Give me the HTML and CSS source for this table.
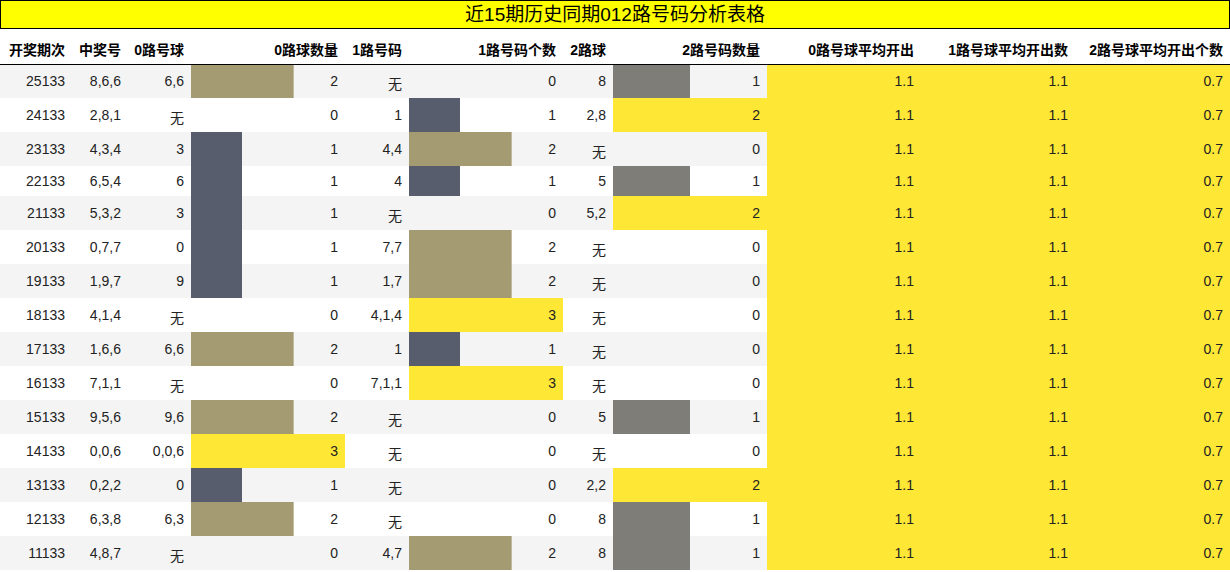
FILE: index.html
```html
<!DOCTYPE html>
<html lang="zh">
<head>
<meta charset="utf-8">
<title>近15期历史同期012路号码分析表格</title>
<link rel="stylesheet" href="styles.css">
</head>
<body>
<div class="title">近15期历史同期012路号码分析表格</div>
<table class="grid">
<colgroup>
<col class="c1"><col class="c2"><col class="c3"><col class="c4"><col class="c5"><col class="c6"><col class="c7"><col class="c8"><col class="c9"><col class="c10"><col class="c11">
</colgroup>
<thead>
<tr><th>开奖期次</th><th>中奖号</th><th>0路号球</th><th>0路球数量</th><th>1路号码</th><th>1路号码个数</th><th>2路球</th><th>2路号码数量</th><th>0路号球平均开出</th><th>1路号球平均开出数</th><th>2路号球平均开出个数</th></tr>
</thead>
<tbody>
<tr class="odd"><td>25133</td><td>8,6,6</td><td>6,6</td><td class="bar khaki" style="--w:66.67%">2</td><td class="cjk">无</td><td class="bar">0</td><td>8</td><td class="bar gray" style="--w:50%">1</td><td class="avg">1.1</td><td class="avg">1.1</td><td class="avg">0.7</td></tr>
<tr><td>24133</td><td>2,8,1</td><td class="cjk">无</td><td class="bar">0</td><td>1</td><td class="bar slate" style="--w:33.33%">1</td><td>2,8</td><td class="bar yellow" style="--w:100%">2</td><td class="avg">1.1</td><td class="avg">1.1</td><td class="avg">0.7</td></tr>
<tr class="odd"><td>23133</td><td>4,3,4</td><td>3</td><td class="bar slate" style="--w:33.33%">1</td><td>4,4</td><td class="bar khaki" style="--w:66.67%">2</td><td class="cjk">无</td><td class="bar">0</td><td class="avg">1.1</td><td class="avg">1.1</td><td class="avg">0.7</td></tr>
<tr class="short"><td>22133</td><td>6,5,4</td><td>6</td><td class="bar slate" style="--w:33.33%">1</td><td>4</td><td class="bar slate" style="--w:33.33%">1</td><td>5</td><td class="bar gray" style="--w:50%">1</td><td class="avg">1.1</td><td class="avg">1.1</td><td class="avg">0.7</td></tr>
<tr class="odd"><td>21133</td><td>5,3,2</td><td>3</td><td class="bar slate" style="--w:33.33%">1</td><td class="cjk">无</td><td class="bar">0</td><td>5,2</td><td class="bar yellow" style="--w:100%">2</td><td class="avg">1.1</td><td class="avg">1.1</td><td class="avg">0.7</td></tr>
<tr><td>20133</td><td>0,7,7</td><td>0</td><td class="bar slate" style="--w:33.33%">1</td><td>7,7</td><td class="bar khaki" style="--w:66.67%">2</td><td class="cjk">无</td><td class="bar">0</td><td class="avg">1.1</td><td class="avg">1.1</td><td class="avg">0.7</td></tr>
<tr class="odd"><td>19133</td><td>1,9,7</td><td>9</td><td class="bar slate" style="--w:33.33%">1</td><td>1,7</td><td class="bar khaki" style="--w:66.67%">2</td><td class="cjk">无</td><td class="bar">0</td><td class="avg">1.1</td><td class="avg">1.1</td><td class="avg">0.7</td></tr>
<tr><td>18133</td><td>4,1,4</td><td class="cjk">无</td><td class="bar">0</td><td>4,1,4</td><td class="bar yellow" style="--w:100%">3</td><td class="cjk">无</td><td class="bar">0</td><td class="avg">1.1</td><td class="avg">1.1</td><td class="avg">0.7</td></tr>
<tr class="odd"><td>17133</td><td>1,6,6</td><td>6,6</td><td class="bar khaki" style="--w:66.67%">2</td><td>1</td><td class="bar slate" style="--w:33.33%">1</td><td class="cjk">无</td><td class="bar">0</td><td class="avg">1.1</td><td class="avg">1.1</td><td class="avg">0.7</td></tr>
<tr><td>16133</td><td>7,1,1</td><td class="cjk">无</td><td class="bar">0</td><td>7,1,1</td><td class="bar yellow" style="--w:100%">3</td><td class="cjk">无</td><td class="bar">0</td><td class="avg">1.1</td><td class="avg">1.1</td><td class="avg">0.7</td></tr>
<tr class="odd"><td>15133</td><td>9,5,6</td><td>9,6</td><td class="bar khaki" style="--w:66.67%">2</td><td class="cjk">无</td><td class="bar">0</td><td>5</td><td class="bar gray" style="--w:50%">1</td><td class="avg">1.1</td><td class="avg">1.1</td><td class="avg">0.7</td></tr>
<tr><td>14133</td><td>0,0,6</td><td>0,0,6</td><td class="bar yellow" style="--w:100%">3</td><td class="cjk">无</td><td class="bar">0</td><td class="cjk">无</td><td class="bar">0</td><td class="avg">1.1</td><td class="avg">1.1</td><td class="avg">0.7</td></tr>
<tr class="odd"><td>13133</td><td>0,2,2</td><td>0</td><td class="bar slate" style="--w:33.33%">1</td><td class="cjk">无</td><td class="bar">0</td><td>2,2</td><td class="bar yellow" style="--w:100%">2</td><td class="avg">1.1</td><td class="avg">1.1</td><td class="avg">0.7</td></tr>
<tr><td>12133</td><td>6,3,8</td><td>6,3</td><td class="bar khaki" style="--w:66.67%">2</td><td class="cjk">无</td><td class="bar">0</td><td>8</td><td class="bar gray" style="--w:50%">1</td><td class="avg">1.1</td><td class="avg">1.1</td><td class="avg">0.7</td></tr>
<tr class="odd"><td>11133</td><td>4,8,7</td><td class="cjk">无</td><td class="bar">0</td><td>4,7</td><td class="bar khaki" style="--w:66.67%">2</td><td>8</td><td class="bar gray" style="--w:50%">1</td><td class="avg">1.1</td><td class="avg">1.1</td><td class="avg">0.7</td></tr>
</tbody>
</table>
</body>
</html>
```
FILE: styles.css
```css
html, body {
  margin: 0;
  padding: 0;
  background: #ffffff;
}
body {
  width: 1230px;
  font-family: "Liberation Sans", "Noto Sans CJK SC", sans-serif;
  color: #222222;
}
.title {
  box-sizing: border-box;
  height: 29px;
  border: 1px solid #000000;
  background: #ffff00;
  color: #000000;
  font-size: 19px;
  line-height: 27px;
  text-align: center;
  font-family: "Liberation Sans", "Noto Sans CJK SC", sans-serif;
}
.grid {
  width: 1230px;
  table-layout: fixed;
  border-collapse: collapse;
  border-spacing: 0;
  font-size: 14px;
}
.c1 { width: 72px; }
.c2 { width: 56px; }
.c3 { width: 63px; }
.c4 { width: 154px; }
.c5 { width: 64px; }
.c6 { width: 154px; }
.c7 { width: 50px; }
.c8 { width: 154px; }
.c9 { width: 154px; }
.c10 { width: 154px; }
.c11 { width: 155px; }
.grid th {
  height: 35px;
  box-sizing: border-box;
  padding: 5px 7px 0 0;
  text-align: right;
  font-weight: bold;
  color: #000000;
  white-space: nowrap;
  vertical-align: middle;
  border-bottom: 1px solid #000000;
  background: #ffffff;
}
.grid td {
  height: 34px;
  box-sizing: border-box;
  padding: 0 7px 0 0;
  text-align: right;
  vertical-align: middle;
  white-space: nowrap;
  background-color: #ffffff;
  line-height: 18px;
}
.grid tr.short td {
  height: 30px;
}
.grid tr.odd td {
  background-color: #f4f4f4;
}
.grid td.cjk {
  font-family: "Noto Sans CJK SC", sans-serif;
  padding-top: 3px;
}
.grid td.bar {
  background-repeat: no-repeat;
  background-size: var(--w, 0%) 100%;
  background-position: left top;
}
.grid td.khaki { background-image: linear-gradient(#a59b73, #a59b73); }
.grid td.slate { background-image: linear-gradient(#575d6d, #575d6d); }
.grid td.gray { background-image: linear-gradient(#7e7d77, #7e7d77); }
.grid td.yellow { background-image: linear-gradient(#ffe835, #ffe835); }
.grid td.avg,
.grid tr.odd td.avg {
  background-color: #ffe835;
}
```
